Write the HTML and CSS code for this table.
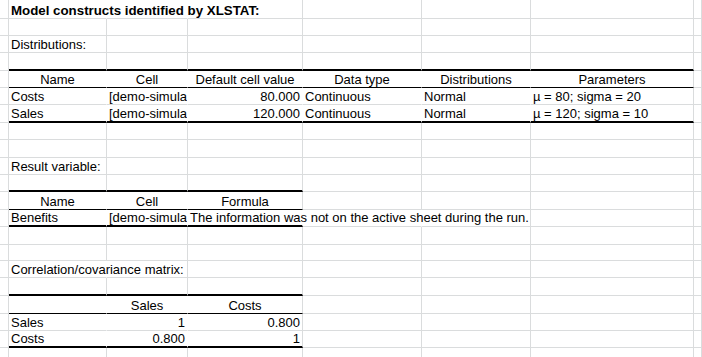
FILE: index.html
```html
<!DOCTYPE html>
<html lang="en">
<head>
<meta charset="utf-8">
<title>XLSTAT model constructs</title>
<link rel="stylesheet" href="styles.css">
</head>
<body>
<table class="sheet">
  <colgroup>
    <col class="ca"><col class="cb"><col class="cc"><col class="cd"><col class="ce"><col class="cf"><col class="cg"><col class="ch">
  </colgroup>
  <tbody>
    <tr class="h19"><td></td><td class="spill nr b">Model constructs identified by XLSTAT:</td><td class="nr"></td><td></td><td></td><td></td><td></td><td></td></tr>
    <tr class="h17"><td></td><td></td><td></td><td></td><td></td><td></td><td></td><td></td></tr>
    <tr class="h17"><td></td><td>Distributions:</td><td></td><td></td><td></td><td></td><td></td><td></td></tr>
    <tr class="h18"><td></td><td class="tk"></td><td class="tk"></td><td class="tk"></td><td class="tk"></td><td class="tk"></td><td class="tk"></td><td></td></tr>
    <tr class="h17"><td></td><td class="nr hb c">Name</td><td class="nr hb c">Cell</td><td class="nr hb c">Default cell value</td><td class="nr hb c">Data type</td><td class="nr hb c">Distributions</td><td class="hb c">Parameters</td><td></td></tr>
    <tr class="h17"><td></td><td class="nr">Costs</td><td class="nr">[demo-simula</td><td class="nr r">80.000</td><td class="nr">Continuous</td><td class="nr">Normal</td><td>µ = 80; sigma = 20</td><td></td></tr>
    <tr class="h18"><td></td><td class="nr tk">Sales</td><td class="nr tk">[demo-simula</td><td class="nr tk r">120.000</td><td class="nr tk">Continuous</td><td class="nr tk">Normal</td><td class="tk">µ = 120; sigma = 10</td><td></td></tr>
    <tr class="h17"><td></td><td></td><td></td><td></td><td></td><td></td><td></td><td></td></tr>
    <tr class="h18"><td></td><td></td><td></td><td></td><td></td><td></td><td></td><td></td></tr>
    <tr class="h17"><td></td><td>Result variable:</td><td></td><td></td><td></td><td></td><td></td><td></td></tr>
    <tr class="h17"><td></td><td class="tk"></td><td class="tk"></td><td class="tk"></td><td></td><td></td><td></td><td></td></tr>
    <tr class="h18"><td></td><td class="nr hb c">Name</td><td class="nr hb c">Cell</td><td class="hb c">Formula</td><td></td><td></td><td></td><td></td></tr>
    <tr class="h17"><td></td><td class="nr tk">Benefits</td><td class="nr tk">[demo-simula</td><td class="nr tk spill">The information was not on the active sheet during the run.</td><td class="nr"></td><td></td><td></td><td></td></tr>
    <tr class="h18"><td></td><td></td><td></td><td></td><td></td><td></td><td></td><td></td></tr>
    <tr class="h16"><td></td><td></td><td></td><td></td><td></td><td></td><td></td><td></td></tr>
    <tr class="h17"><td></td><td class="spill nr">Correlation/covariance matrix:</td><td></td><td></td><td></td><td></td><td></td><td></td></tr>
    <tr class="h18"><td></td><td class="tk"></td><td class="tk"></td><td class="tk"></td><td></td><td></td><td></td><td></td></tr>
    <tr class="h18"><td></td><td class="nr hb"></td><td class="nr hb c">Sales</td><td class="hb c">Costs</td><td></td><td></td><td></td><td></td></tr>
    <tr class="h17"><td></td><td class="nr">Sales</td><td class="nr r">1</td><td class="r">0.800</td><td></td><td></td><td></td><td></td></tr>
    <tr class="h17"><td></td><td class="nr tk">Costs</td><td class="nr tk r">0.800</td><td class="tk r">1</td><td></td><td></td><td></td><td></td></tr>
    <tr class="h17"><td></td><td></td><td></td><td></td><td></td><td></td><td></td><td></td></tr>
  </tbody>
</table>
</body>
</html>
```
FILE: styles.css
```css
html, body {
  margin: 0;
  padding: 0;
  background: #ffffff;
}

.sheet {
  border-collapse: separate;
  border-spacing: 0;
  table-layout: fixed;
  width: 702px;
  font-family: "Liberation Sans", Arial, sans-serif;
  font-size: 13px;
  color: #000000;
}

.ca { width: 9px; }
.cb { width: 98px; }
.cc { width: 81px; }
.cd { width: 115px; }
.ce { width: 119px; }
.cf { width: 109px; }
.cg { width: 163px; }
.ch { width: 8px; }

.sheet td {
  box-sizing: border-box;
  padding: 0 2px;
  border-right: 1px solid #dadcdd;
  border-bottom: 1px solid #dadcdd;
  white-space: nowrap;
  overflow: hidden;
  vertical-align: bottom;
  line-height: 15px;
  text-align: left;
}

.h16 { height: 16px; }
.h17 { height: 17px; }
.h18 { height: 18px; }
.h19 { height: 19px; }

.sheet td.nr { border-right-color: transparent; }
.sheet td.tk { border-bottom: 2px solid #000000; }
.sheet td.hb { border-bottom: 1px solid #000000; }
.sheet td.c { text-align: center; }
.sheet td.r { text-align: right; }
.sheet td.spill { overflow: visible; }
.sheet td.b {
  font-weight: bold;
  font-size: 13.3px;
}
```
